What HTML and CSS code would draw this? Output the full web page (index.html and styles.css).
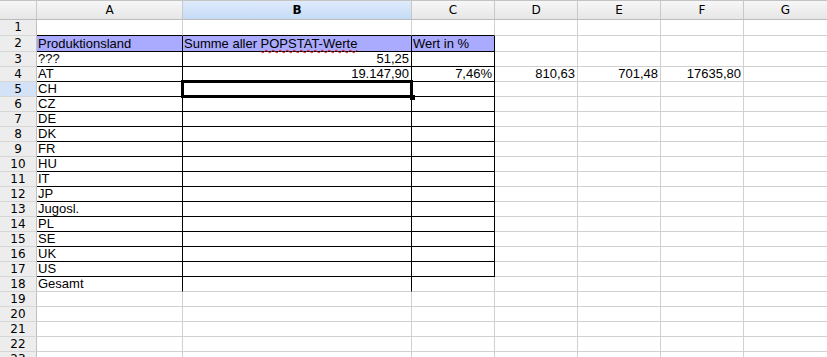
FILE: index.html
```html
<!DOCTYPE html>
<html>
<head>
    <title>POPSTAT Tabelle</title>
    <link rel="stylesheet" href="styles.css">
</head>
<body>
    <div class="sheet">
        <div class="row colhead">
            <div class="ch corner"></div>
            <div class="ch">A</div>
            <div class="ch sel">B</div>
            <div class="ch">C</div>
            <div class="ch">D</div>
            <div class="ch">E</div>
            <div class="ch">F</div>
            <div class="ch">G</div>
        </div>

        <div class="row tall">
            <div class="rh">1</div>
            <div class="c bb"></div><div class="c bb"></div><div class="c bb"></div>
            <div class="c"></div><div class="c"></div><div class="c"></div><div class="c"></div>
        </div>
        <div class="row tall">
            <div class="rh">2</div>
            <div class="c t hd">Produktionsland</div>
            <div class="c t hd">Summe aller <span class="spell">POPSTAT-Werte</span></div>
            <div class="c t hd">Wert in %</div>
            <div class="c"></div><div class="c"></div><div class="c"></div><div class="c"></div>
        </div>
        <div class="row">
            <div class="rh">3</div>
            <div class="c t">???</div>
            <div class="c t num">51,25</div>
            <div class="c t"></div>
            <div class="c"></div><div class="c"></div><div class="c"></div><div class="c"></div>
        </div>
        <div class="row">
            <div class="rh">4</div>
            <div class="c t">AT</div>
            <div class="c t num">19.147,90</div>
            <div class="c t num">7,46%</div>
            <div class="c num">810,63</div>
            <div class="c num">701,48</div>
            <div class="c num">17635,80</div>
            <div class="c"></div>
        </div>
        <div class="row">
            <div class="rh sel">5</div>
            <div class="c t">CH</div>
            <div class="c t active"><div class="cursor"></div><div class="handle"></div></div>
            <div class="c t"></div>
            <div class="c"></div><div class="c"></div><div class="c"></div><div class="c"></div>
        </div>
        <div class="row">
            <div class="rh">6</div>
            <div class="c t">CZ</div><div class="c t"></div><div class="c t"></div>
            <div class="c"></div><div class="c"></div><div class="c"></div><div class="c"></div>
        </div>
        <div class="row">
            <div class="rh">7</div>
            <div class="c t">DE</div><div class="c t"></div><div class="c t"></div>
            <div class="c"></div><div class="c"></div><div class="c"></div><div class="c"></div>
        </div>
        <div class="row">
            <div class="rh">8</div>
            <div class="c t">DK</div><div class="c t"></div><div class="c t"></div>
            <div class="c"></div><div class="c"></div><div class="c"></div><div class="c"></div>
        </div>
        <div class="row">
            <div class="rh">9</div>
            <div class="c t">FR</div><div class="c t"></div><div class="c t"></div>
            <div class="c"></div><div class="c"></div><div class="c"></div><div class="c"></div>
        </div>
        <div class="row">
            <div class="rh">10</div>
            <div class="c t">HU</div><div class="c t"></div><div class="c t"></div>
            <div class="c"></div><div class="c"></div><div class="c"></div><div class="c"></div>
        </div>
        <div class="row">
            <div class="rh">11</div>
            <div class="c t">IT</div><div class="c t"></div><div class="c t"></div>
            <div class="c"></div><div class="c"></div><div class="c"></div><div class="c"></div>
        </div>
        <div class="row">
            <div class="rh">12</div>
            <div class="c t">JP</div><div class="c t"></div><div class="c t"></div>
            <div class="c"></div><div class="c"></div><div class="c"></div><div class="c"></div>
        </div>
        <div class="row">
            <div class="rh">13</div>
            <div class="c t">Jugosl.</div><div class="c t"></div><div class="c t"></div>
            <div class="c"></div><div class="c"></div><div class="c"></div><div class="c"></div>
        </div>
        <div class="row">
            <div class="rh">14</div>
            <div class="c t">PL</div><div class="c t"></div><div class="c t"></div>
            <div class="c"></div><div class="c"></div><div class="c"></div><div class="c"></div>
        </div>
        <div class="row">
            <div class="rh">15</div>
            <div class="c t">SE</div><div class="c t"></div><div class="c t"></div>
            <div class="c"></div><div class="c"></div><div class="c"></div><div class="c"></div>
        </div>
        <div class="row">
            <div class="rh">16</div>
            <div class="c t">UK</div><div class="c t"></div><div class="c t"></div>
            <div class="c"></div><div class="c"></div><div class="c"></div><div class="c"></div>
        </div>
        <div class="row">
            <div class="rh">17</div>
            <div class="c t">US</div><div class="c t"></div><div class="c t"></div>
            <div class="c"></div><div class="c"></div><div class="c"></div><div class="c"></div>
        </div>
        <div class="row">
            <div class="rh">18</div>
            <div class="c br">Gesamt</div><div class="c br"></div><div class="c"></div>
            <div class="c"></div><div class="c"></div><div class="c"></div><div class="c"></div>
        </div>
        <div class="row">
            <div class="rh">19</div>
            <div class="c"></div><div class="c"></div><div class="c"></div>
            <div class="c"></div><div class="c"></div><div class="c"></div><div class="c"></div>
        </div>
        <div class="row">
            <div class="rh">20</div>
            <div class="c"></div><div class="c"></div><div class="c"></div>
            <div class="c"></div><div class="c"></div><div class="c"></div><div class="c"></div>
        </div>
        <div class="row">
            <div class="rh">21</div>
            <div class="c"></div><div class="c"></div><div class="c"></div>
            <div class="c"></div><div class="c"></div><div class="c"></div><div class="c"></div>
        </div>
        <div class="row">
            <div class="rh">22</div>
            <div class="c"></div><div class="c"></div><div class="c"></div>
            <div class="c"></div><div class="c"></div><div class="c"></div><div class="c"></div>
        </div>
        <div class="row">
            <div class="rh">23</div>
            <div class="c"></div><div class="c"></div><div class="c"></div>
            <div class="c"></div><div class="c"></div><div class="c"></div><div class="c"></div>
        </div>
    </div>
</body>
</html>
```

FILE: styles.css
```css
html, body { margin: 0; padding: 0; background: white; overflow: hidden; }
body { height: 357px; }

.sheet { width: 827px; font-family: "Liberation Sans", Arial, sans-serif; font-size: 13px; color: black; }

.row {
    display: grid;
    grid-template-columns: 37px 146px 229px repeat(5, 83px);
    height: 15px;
}
.row.tall { height: 16px; }

/* column letters */
.colhead { height: 20px; }
.ch {
    box-sizing: border-box;
    border-top: 1px solid #c4c4c4;
    border-right: 1px solid #c8c8c8;
    border-bottom: 1px solid #bcbcbc;
    background: linear-gradient(#f7f7f7, #e6e6e6);
    font-family: "DejaVu Sans", sans-serif;
    font-size: 12px;
    line-height: 17px;
    padding-top: 1px;
    text-align: center;
}
.ch.sel { background: linear-gradient(#dfebfb, #c5dbf6); font-weight: bold; }
.ch:last-child { border-right: none; }

/* row numbers */
.rh {
    box-sizing: border-box;
    border-right: 1px solid #c0c0c0;
    border-bottom: 1px solid #d6d6d6;
    background: #ededed;
    font-family: "DejaVu Sans", sans-serif;
    font-size: 12px;
    line-height: 15px;
    text-align: center;
    overflow: hidden;
}
.rh.sel { background: #d3e2f7; }

/* cells */
.c {
    box-sizing: border-box;
    border-right: 1px solid #d0d0d0;
    border-bottom: 1px solid #d0d0d0;
    padding: 0 2px 0 1px;
    line-height: 14px;
    white-space: nowrap;
    overflow: hidden;
}
.tall .c { line-height: 15px; }
.c:last-child { border-right: none; }
.c.num { text-align: right; }

.c.t { border-right-color: black; border-bottom-color: black; }
.c.bb { border-bottom-color: black; }
.c.br { border-right-color: black; }
.c.hd { background: #aaaaff; overflow: visible; }

.spell {
    text-decoration: underline wavy #e02020;
    text-decoration-thickness: 1px;
    text-underline-offset: 1px;
    text-decoration-skip-ink: none;
}

.c.active { position: relative; overflow: visible; }
.cursor {
    position: absolute;
    left: -2px;
    top: -2px;
    width: 232px;
    height: 18px;
    box-sizing: border-box;
    border: 3px solid black;
}
.handle {
    position: absolute;
    left: 227px;
    top: 13px;
    width: 5px;
    height: 5px;
    background: black;
}
```
